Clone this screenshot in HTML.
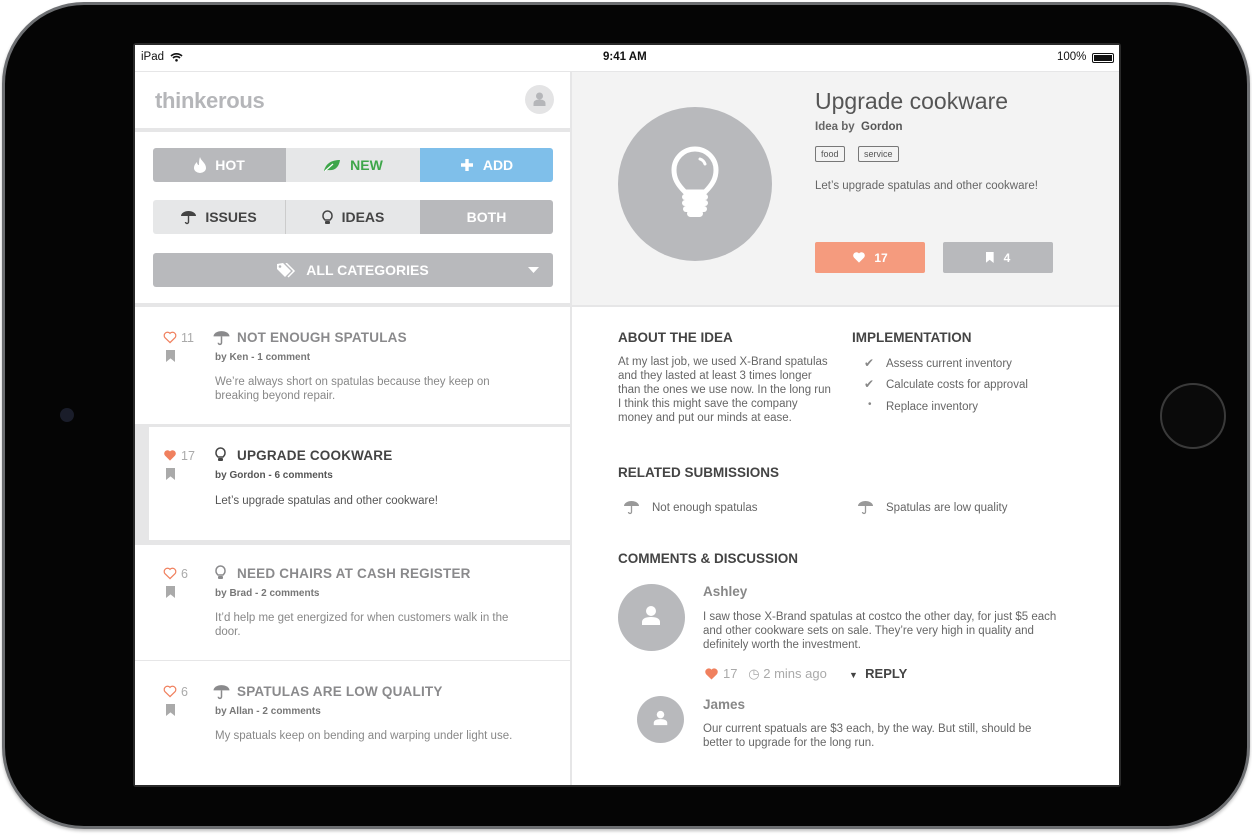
<!DOCTYPE html>
<html><head><meta charset="utf-8"><style>
*{margin:0;padding:0;box-sizing:border-box}
body{width:1252px;height:836px;background:#fff;position:relative;overflow:hidden;font-family:"Liberation Sans",sans-serif;color:#555}
.a{position:absolute}
.dev{left:2px;top:2px;width:1248px;height:827px;border-radius:82px;background:#050505;border:3px solid #6d6f72;box-shadow:0 2px 3px rgba(0,0,0,.25)}
.scr{left:133px;top:43px;width:988px;height:744px;background:#2a2a2a;border-radius:3px}
.btn{position:absolute;height:34px;display:flex;align-items:center;justify-content:center;font-weight:bold;font-size:14px;gap:9px}
.sm{font-size:10px;font-weight:bold;color:#777}
.d{font-size:11.5px;color:#888;line-height:14px}
.t{font-size:13.5px;font-weight:bold;color:#8a8a8c;letter-spacing:.2px}
.cnt{font-size:12.5px;color:#aaa}
.st{font-size:13.5px;font-weight:bold;color:#444}
.p{font-size:11.5px;color:#666;line-height:14px}
.bm{width:9px;height:12px;background:#aaa;clip-path:polygon(0 0,100% 0,100% 100%,50% 70%,0 100%)}
</style></head><body>
<svg width="0" height="0" style="position:absolute"><defs>
<path id="hrt" d="M7 12.5L1.6 7.2A3.4 3.4 0 0 1 7 2.6a3.4 3.4 0 0 1 5.4 4.6z"/>
</defs></svg>
<div class="a dev"></div>
<div class="a" style="left:60px;top:408px;width:14px;height:14px;border-radius:7px;background:#1a1d2a"></div>
<div class="a" style="left:1160px;top:383px;width:66px;height:66px;border-radius:33px;border:2px solid #3a3a3a;background:#0a0a0a"></div>
<div class="a scr"></div>
<div class="a" style="left:135px;top:45px;width:984px;height:740px;background:#e6e6e7;overflow:hidden">
 <div class="a" style="left:0;top:0;width:984px;height:26px;background:#fff;font-size:11.5px;color:#111">
  <span class="a" style="left:6px;top:6px">iPad</span>
  <svg class="a" style="left:35px;top:7px" width="13" height="10" viewBox="0 0 13 10"><path d="M1 4a8 8 0 0 1 11 0M3 6a5 5 0 0 1 7 0" stroke="#111" stroke-width="1.6" fill="none"/><circle cx="6.5" cy="8.3" r="1.3" fill="#111"/></svg>
  <span class="a" style="left:468px;top:6px;font-weight:bold">9:41 AM</span>
  <span class="a" style="left:922px;top:6px">100%</span>
  <div class="a" style="left:957px;top:8px;width:22px;height:10px;border:1px solid #111;border-radius:2px;padding:1px"><div style="width:100%;height:100%;background:#111"></div></div>
 </div>
 <div class="a" style="left:0;top:27px;width:435px;height:56px;background:#fff">
  <span class="a" style="left:20px;top:16px;font-size:22px;font-weight:bold;color:#b5b6b9;letter-spacing:-.3px">thinkerous</span>
  <div class="a" style="left:390px;top:13px;width:29px;height:29px;border-radius:15px;background:#e4e4e5"></div>
  <svg class="a" style="left:397px;top:19px" width="15" height="16" viewBox="0 0 15 16"><circle cx="7.5" cy="5" r="3.5" fill="#b5b6b9"/><path d="M1.5 15v-2.5c0-2.5 2-4 6-4s6 1.5 6 4V15z" fill="#b5b6b9"/></svg>
 </div>
 <div class="a" style="left:0;top:87px;width:435px;height:171px;background:#fff">
  <div class="btn" style="left:18px;top:16px;width:133px;background:#b8b9bc;color:#fff;border-radius:3px 0 0 3px"><svg width="12" height="16" viewBox="0 0 12 16"><path d="M6 0C7 4 12 6 12 11a6 5 0 0 1-12 0C0 8 2 6 3 5c0 2 1 3 2 3C5 5 5 3 6 0z" fill="#fff"/></svg>HOT</div>
  <div class="btn" style="left:151px;top:16px;width:134px;background:#e6e7e8;color:#3ea64a"><svg width="18" height="13" viewBox="0 0 18 13"><path d="M1 12C3 4 9 1 17 1c-1 7-5 11-12 10" fill="#3ea64a"/><path d="M2 12L10 5" stroke="#fff" stroke-width="1.2"/></svg>NEW</div>
  <div class="btn" style="left:285px;top:16px;width:133px;background:#7fbfea;color:#fff;border-radius:0 3px 3px 0"><svg width="14" height="14" viewBox="0 0 14 14"><path d="M7 1v12M1 7h12" stroke="#fff" stroke-width="3.4"/></svg>ADD</div>
  <div class="btn" style="left:18px;top:68px;width:133px;background:#e6e7e8;color:#444;border-radius:3px 0 0 3px;border-right:1px solid #ccc"><svg width="15" height="15" viewBox="0 0 15 15"><path d="M0 6a7.5 5 0 0 1 15 0z" fill="#444"/><path d="M7.5 6v6a1.5 1.5 0 0 1-3 0" stroke="#444" stroke-width="1.4" fill="none"/></svg>ISSUES</div>
  <div class="btn" style="left:151px;top:68px;width:134px;background:#e6e7e8;color:#444"><svg width="11" height="15" viewBox="0 0 11 15"><path d="M3 10C1 8 1 7 1 5.5a4.5 4.5 0 0 1 9 0C10 7 10 8 8 10z" fill="none" stroke="#444" stroke-width="1.5"/><rect x="3" y="11" width="5" height="3" rx="1" fill="#444"/></svg>IDEAS</div>
  <div class="btn" style="left:285px;top:68px;width:133px;background:#b8b9bc;color:#fff;border-radius:0 3px 3px 0">BOTH</div>
  <div class="btn" style="left:18px;top:121px;width:400px;background:#b8b9bc;color:#fff;border-radius:3px"><svg width="20" height="15" viewBox="0 0 20 15"><path d="M0 1v5l8 8 6-6-8-8z" fill="#fff"/><circle cx="3" cy="3.5" r="1.3" fill="#b8b9bc"/><path d="M9 0l8 8-6 6" stroke="#fff" stroke-width="1.5" fill="none"/></svg>ALL CATEGORIES
   <svg class="a" style="right:14px;top:14px" width="11" height="7" viewBox="0 0 11 7"><path d="M0 0h11L5.5 6z" fill="#fff"/></svg></div>
 </div>
 <div class="a" style="left:0;top:262px;width:435px;height:117px;background:#fff">
  <svg class="a" style="left:28px;top:24px" width="14" height="13" viewBox="0 0 14 14"><use href="#hrt" fill="none" stroke="#f0805e" stroke-width="1.3"/></svg><span class="a cnt" style="left:46px;top:24px">11</span>
  <div class="a bm" style="left:31px;top:43px"></div>
  <svg class="a" style="left:78px;top:23px" width="17" height="16" viewBox="0 0 15 15"><path d="M0 6a7.5 5 0 0 1 15 0z" fill="#8a8a8c"/><path d="M7.5 6v6a1.5 1.5 0 0 1-3 0" stroke="#8a8a8c" stroke-width="1.4" fill="none"/></svg>
  <span class="a t" style="left:102px;top:23px">NOT ENOUGH SPATULAS</span>
  <span class="a sm" style="left:80px;top:45px">by Ken - 1 comment</span>
  <div class="a d" style="left:80px;top:68px;width:300px">We’re always short on spatulas because they keep on breaking beyond repair.</div>
 </div>
 <div class="a" style="left:0;top:382px;width:435px;height:114px;background:#e6e6e7"></div>
 <div class="a" style="left:14px;top:382px;width:421px;height:113px;background:#fff">
  <svg class="a" style="left:14px;top:22px" width="14" height="13" viewBox="0 0 14 14"><use href="#hrt" fill="#f0805e"/></svg><span class="a cnt" style="left:32px;top:22px">17</span>
  <div class="a bm" style="left:17px;top:41px"></div>
  <svg class="a" style="left:66px;top:20px" width="11" height="15" viewBox="0 0 11 15"><path d="M3 10C1 8 1 7 1 5.5a4.5 4.5 0 0 1 9 0C10 7 10 8 8 10z" fill="none" stroke="#444" stroke-width="1.5"/><rect x="3" y="11" width="5" height="3" rx="1" fill="#444"/></svg>
  <span class="a t" style="left:88px;top:21px;color:#444">UPGRADE COOKWARE</span>
  <span class="a sm" style="left:66px;top:43px;color:#555">by Gordon - 6 comments</span>
  <div class="a d" style="left:66px;top:67px;color:#555">Let’s upgrade spatulas and other cookware!</div>
 </div>
 <div class="a" style="left:0;top:500px;width:435px;height:115px;background:#fff">
  <svg class="a" style="left:28px;top:22px" width="14" height="13" viewBox="0 0 14 14"><use href="#hrt" fill="none" stroke="#f0805e" stroke-width="1.3"/></svg><span class="a cnt" style="left:46px;top:22px">6</span>
  <div class="a bm" style="left:31px;top:41px"></div>
  <svg class="a" style="left:80px;top:20px" width="11" height="15" viewBox="0 0 11 15"><path d="M3 10C1 8 1 7 1 5.5a4.5 4.5 0 0 1 9 0C10 7 10 8 8 10z" fill="none" stroke="#8a8a8c" stroke-width="1.5"/><rect x="3" y="11" width="5" height="3" rx="1" fill="#8a8a8c"/></svg>
  <span class="a t" style="left:102px;top:21px">NEED CHAIRS AT CASH REGISTER</span>
  <span class="a sm" style="left:80px;top:43px">by Brad - 2 comments</span>
  <div class="a d" style="left:80px;top:66px;width:310px">It’d help me get energized for when customers walk in the door.</div>
 </div>
 <div class="a" style="left:0;top:616px;width:435px;height:124px;background:#fff">
  <svg class="a" style="left:28px;top:24px" width="14" height="13" viewBox="0 0 14 14"><use href="#hrt" fill="none" stroke="#f0805e" stroke-width="1.3"/></svg><span class="a cnt" style="left:46px;top:24px">6</span>
  <div class="a bm" style="left:31px;top:43px"></div>
  <svg class="a" style="left:78px;top:23px" width="17" height="16" viewBox="0 0 15 15"><path d="M0 6a7.5 5 0 0 1 15 0z" fill="#8a8a8c"/><path d="M7.5 6v6a1.5 1.5 0 0 1-3 0" stroke="#8a8a8c" stroke-width="1.4" fill="none"/></svg>
  <span class="a t" style="left:102px;top:23px">SPATULAS ARE LOW QUALITY</span>
  <span class="a sm" style="left:80px;top:45px">by Allan - 2 comments</span>
  <div class="a d" style="left:80px;top:68px">My spatuals keep on bending and warping under light use.</div>
 </div>
 <div class="a" style="left:437px;top:27px;width:547px;height:233px;background:#f3f3f3">
  <div class="a" style="left:46px;top:35px;width:154px;height:154px;border-radius:77px;background:#b8b9bc"></div>
  <svg class="a" style="left:99px;top:74px" width="48" height="72" viewBox="0 0 48 72"><path d="M14 46C6 38 3 32 3 24a21 21 0 0 1 42 0c0 8-3 14-11 22z" fill="none" stroke="#fff" stroke-width="5"/><path d="M29 13a8 8 0 0 1 5 5" stroke="#fff" stroke-width="3" fill="none" stroke-linecap="round"/><rect x="11" y="48" width="26" height="6" rx="3" fill="#fff"/><rect x="11" y="54" width="26" height="6" rx="3" fill="#fff"/><rect x="12" y="60" width="24" height="6" rx="3" fill="#fff"/><rect x="16" y="64" width="16" height="7" rx="3.5" fill="#fff"/></svg>
  <span class="a" style="left:243px;top:16px;font-size:23px;color:#555">Upgrade cookware</span>
  <span class="a" style="left:243px;top:49px;font-size:11.5px;font-weight:bold;color:#666">Idea by&nbsp; <span style="color:#555">Gordon</span></span>
  <span class="a" style="left:243px;top:74px;border:1px solid #777;border-radius:2px;font-size:9px;padding:2px 5px;color:#555">food</span>
  <span class="a" style="left:286px;top:74px;border:1px solid #777;border-radius:2px;font-size:9px;padding:2px 5px;color:#555">service</span>
  <span class="a" style="left:243px;top:108px;font-size:11.5px;color:#666">Let’s upgrade spatulas and other cookware!</span>
  <div class="btn" style="left:243px;top:170px;width:110px;height:31px;background:#f59b7e;color:#fff;border-radius:2px;font-size:12px;gap:8px"><svg width="14" height="13" viewBox="0 0 14 14"><use href="#hrt" fill="#fff"/></svg>17</div>
  <div class="btn" style="left:371px;top:170px;width:110px;height:31px;background:#b8b9bc;color:#fff;border-radius:2px;font-size:12px;gap:10px"><span style="display:inline-block;width:8px;height:11px;background:#fff;clip-path:polygon(0 0,100% 0,100% 100%,50% 70%,0 100%)"></span>4</div>
 </div>
 <div class="a" style="left:437px;top:262px;width:547px;height:478px;background:#fff">
  <span class="a st" style="left:46px;top:23px">ABOUT THE IDEA</span>
  <div class="a p" style="left:46px;top:48px;width:216px">At my last job, we used X-Brand spatulas and they lasted at least 3 times longer than the ones we use now. In the long run I think this might save the company money and put our minds at ease.</div>
  <span class="a st" style="left:280px;top:23px">IMPLEMENTATION</span>
  <span class="a" style="left:292px;top:49px;color:#888;font-size:12px">✔</span><span class="a p" style="left:314px;top:50px">Assess current inventory</span>
  <span class="a" style="left:292px;top:70px;color:#888;font-size:12px">✔</span><span class="a p" style="left:314px;top:71px">Calculate costs for approval</span>
  <span class="a" style="left:296px;top:92px;color:#888;font-size:10px">•</span><span class="a p" style="left:314px;top:93px">Replace inventory</span>
  <span class="a st" style="left:46px;top:158px">RELATED SUBMISSIONS</span>
  <svg class="a" style="left:52px;top:193px" width="15" height="15" viewBox="0 0 15 15"><path d="M0 6a7.5 5 0 0 1 15 0z" fill="#999"/><path d="M7.5 6v6a1.5 1.5 0 0 1-3 0" stroke="#999" stroke-width="1.3" fill="none"/></svg>
  <span class="a p" style="left:80px;top:194px">Not enough spatulas</span>
  <svg class="a" style="left:286px;top:193px" width="15" height="15" viewBox="0 0 15 15"><path d="M0 6a7.5 5 0 0 1 15 0z" fill="#999"/><path d="M7.5 6v6a1.5 1.5 0 0 1-3 0" stroke="#999" stroke-width="1.3" fill="none"/></svg>
  <span class="a p" style="left:314px;top:194px">Spatulas are low quality</span>
  <span class="a st" style="left:46px;top:244px">COMMENTS &amp; DISCUSSION</span>
  <div class="a" style="left:46px;top:277px;width:67px;height:67px;border-radius:34px;background:#b8b9bc"></div>
  <svg class="a" style="left:69px;top:298px" width="20" height="21" viewBox="0 0 20 21"><circle cx="10" cy="6" r="5" fill="#fff"/><path d="M1 20v-3c0-3 3-5 9-5s9 2 9 5v3z" fill="#fff"/></svg>
  <span class="a" style="left:131px;top:277px;font-size:13.5px;font-weight:bold;color:#888">Ashley</span>
  <div class="a p" style="left:131px;top:303px;width:370px">I saw those X-Brand spatulas at costco the other day, for just $5 each and other cookware sets on sale. They’re very high in quality and definitely worth the investment.</div>
  <svg class="a" style="left:132px;top:360px" width="15" height="14" viewBox="0 0 14 14"><use href="#hrt" fill="#f0805e"/></svg>
  <span class="a" style="left:151px;top:359px;font-size:13px;color:#aaa">17 &nbsp;&nbsp;◷ 2 mins ago</span>
  <span class="a" style="left:277px;top:359px;font-size:13px;font-weight:bold;color:#444"><span style="font-size:9px">▼</span>&nbsp; REPLY</span>
  <div class="a" style="left:65px;top:389px;width:47px;height:47px;border-radius:24px;background:#b8b9bc"></div>
  <svg class="a" style="left:81px;top:403px" width="15" height="16" viewBox="0 0 20 21"><circle cx="10" cy="6" r="5" fill="#fff"/><path d="M1 20v-3c0-3 3-5 9-5s9 2 9 5v3z" fill="#fff"/></svg>
  <span class="a" style="left:131px;top:390px;font-size:13.5px;font-weight:bold;color:#888">James</span>
  <div class="a p" style="left:131px;top:415px;width:360px">Our current spatuals are $3 each, by the way. But still, should be better to upgrade for the long run.</div>
 </div>
</div>
</body></html>
